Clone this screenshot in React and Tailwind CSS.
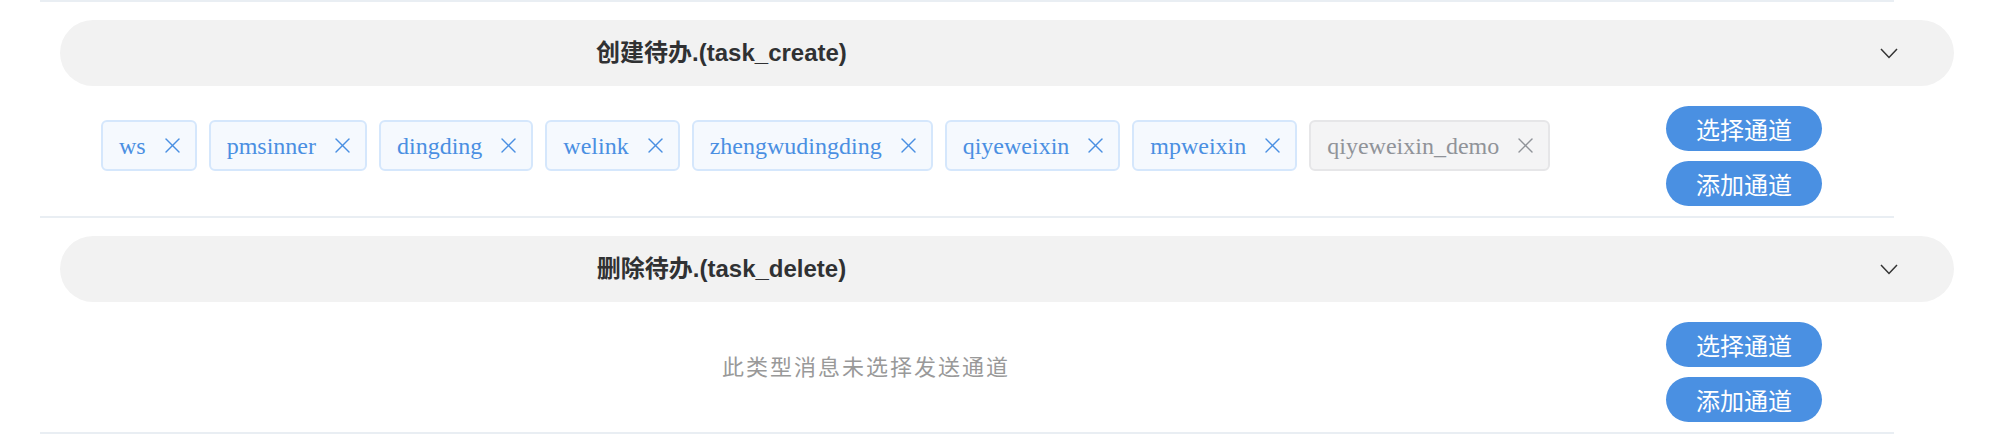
import React from "react";

const serif = { fontFamily: '"Liberation Serif", "Times New Roman", serif' };
const sans = { fontFamily: '"Liberation Sans", Arial, "Noto Sans CJK SC", sans-serif' };
const cjk = { fontFamily: '"Noto Sans CJK SC", "Liberation Sans", sans-serif' };

function CloseIcon() {
  return (
    <svg width="15" height="15" viewBox="0 0 15 15" fill="none" stroke="currentColor" strokeWidth="1.4" strokeLinecap="round">
      <line x1="1" y1="1" x2="14" y2="14" />
      <line x1="14" y1="1" x2="1" y2="14" />
    </svg>
  );
}

function Chevron() {
  return (
    <svg width="18" height="11" viewBox="0 0 18 11" fill="none" stroke="#333333" strokeWidth="1.5" className="mr-[56px]">
      <polyline points="1,1 9,9.5 17,1" />
    </svg>
  );
}

function Tag({ label, disabled }) {
  const cls = disabled
    ? "bg-[#f4f4f5] border-[#e6e6e8] text-[#909399]"
    : "bg-[#f5f9fe] border-[#d5e7fc] text-[#4a8fe2]";
  return (
    <div className={"h-[51px] flex items-center rounded-[6px] border-2 pl-[16px] pr-[15px] gap-[19px] " + cls}>
      <span className="text-[24px] leading-none" style={serif}>{label}</span>
      <CloseIcon />
    </div>
  );
}

function Section({ title, tags }) {
  return (
    <div className="border-b-2 border-[#e9eef3]">
      <div className="ml-[20px] mt-[18px] w-[1894px] h-[66px] rounded-full bg-[#f2f2f2] flex items-center">
        <div className="w-[1323px] text-center font-bold text-[24px] text-[#303133]" style={sans}>{title}</div>
        <div className="flex-1" />
        <Chevron />
      </div>
      <div className="flex pt-[20px] pb-[10px]">
        <div className="ml-[40px] w-[1572px]">
          {tags.length ? (
            <div className="flex flex-wrap gap-[12px] pl-[21px] mt-[14px]">
              {tags.map((t) => (
                <Tag key={t.label} label={t.label} disabled={t.disabled} />
              ))}
            </div>
          ) : (
            <div className="mt-[27px] text-center text-[22px] leading-[32px] tracking-[2px] text-[#999999]" style={cjk}>
              此类型消息未选择发送通道
            </div>
          )}
        </div>
        <div className="ml-[14px] flex flex-col gap-[10px]">
          <button className="w-[156px] h-[45px] rounded-full bg-[#4a90e2] text-white text-[24px] leading-none" style={cjk}>选择通道</button>
          <button className="w-[156px] h-[45px] rounded-full bg-[#4a90e2] text-white text-[24px] leading-none" style={cjk}>添加通道</button>
        </div>
      </div>
    </div>
  );
}

export default function App() {
  const tags = [
    { label: "ws" },
    { label: "pmsinner" },
    { label: "dingding" },
    { label: "welink" },
    { label: "zhengwudingding" },
    { label: "qiyeweixin" },
    { label: "mpweixin" },
    { label: "qiyeweixin_demo", disabled: true },
  ];
  return (
    <div className="w-[2012px] h-[434px] bg-white overflow-hidden">
      <div className="ml-[40px] w-[1854px]">
        <div className="h-[2px] bg-[#e9eef3]" />
        <Section title="创建待办.(task_create)" tags={tags} />
        <Section title="删除待办.(task_delete)" tags={[]} />
      </div>
    </div>
  );
}
